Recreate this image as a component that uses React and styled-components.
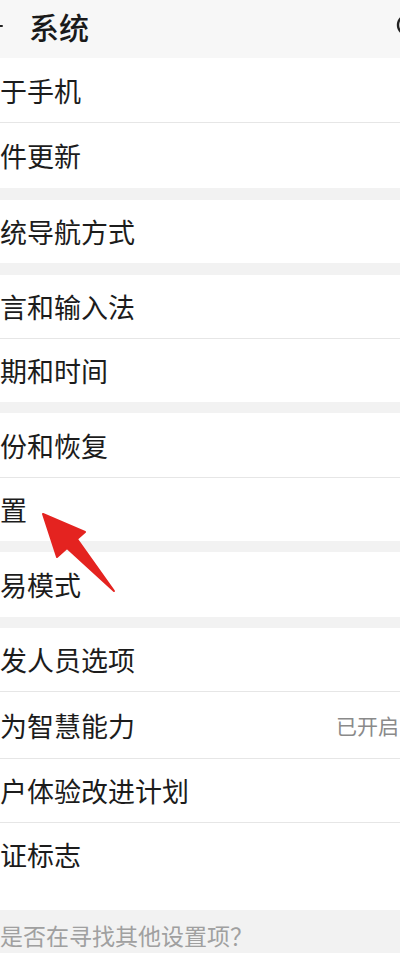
import React from 'react'
import styled, { createGlobalStyle } from 'styled-components'

const GlobalStyle = createGlobalStyle`
  html, body {
    margin: 0;
    padding: 0;
    background: #f2f2f2;
  }
  body {
    font-family: "Noto Sans CJK SC", "Noto Sans", sans-serif;
    overflow: hidden;
  }
`

const Page = styled.div`
  position: relative;
  width: 400px;
  height: 953px;
  overflow: hidden;
  background: #f2f2f2;
`

const Header = styled.div`
  display: flex;
  align-items: center;
  height: 58px;
  padding-bottom: 7px;
  box-sizing: border-box;
  background: #f7f7f7;
`

const BackIcon = styled.svg`
  flex: none;
  margin-left: -18px;
  width: 22px;
  height: 22px;
`

const Title = styled.h1`
  margin: 0 0 0 25px;
  font-size: 30px;
  font-weight: 500;
  color: #1a1a1a;
  line-height: 1;
`

const Spacer = styled.div`
  flex: 1;
`

const SearchIcon = styled.svg`
  flex: none;
  width: 26px;
  height: 26px;
  margin-right: -22px;
`

const Group = styled.div`
  background: #fff;
  margin-bottom: ${p => p.$gap}px;
  padding-bottom: ${p => p.$pad || 0}px;
`

const Row = styled.div`
  display: flex;
  align-items: center;
  box-sizing: border-box;
  height: ${p => p.$h}px;
  border-top: ${p => (p.$first ? 'none' : '1px solid #e6e6e6')};
`

const Label = styled.span`
  font-size: 27px;
  color: #1c1c1c;
  line-height: 1;
  white-space: nowrap;
`

const Status = styled.span`
  margin-left: auto;
  margin-right: 1px;
  font-size: 21px;
  color: #8a8a8a;
  line-height: 1;
  white-space: nowrap;
`

const Footer = styled.div`
  padding-top: 14px;
`

const Hint = styled.div`
  font-size: 23px;
  line-height: 1;
  color: #a0a0a0;
  white-space: nowrap;
`

const Pointer = styled.svg`
  position: absolute;
  left: 0;
  top: 0;
  width: 400px;
  height: 953px;
  pointer-events: none;
`

const groups = [
  { gap: 12, items: [{ label: '于手机', h: 64 }, { label: '件更新', h: 66 }] },
  { gap: 12, items: [{ label: '统导航方式', h: 63 }] },
  { gap: 11, items: [{ label: '言和输入法', h: 63 }, { label: '期和时间', h: 64 }] },
  { gap: 11, items: [{ label: '份和恢复', h: 64 }, { label: '置', h: 64 }] },
  { gap: 11, items: [{ label: '易模式', h: 65 }] },
  {
    gap: 0,
    pad: 24,
    items: [
      { label: '发人员选项', h: 63 },
      { label: '为智慧能力', h: 67, status: '已开启' },
      { label: '户体验改进计划', h: 64 },
      { label: '证标志', h: 64 },
    ],
  },
]

export default function App() {
  return (
    <Page>
      <GlobalStyle />
      <Header>
        <BackIcon viewBox="0 0 22 22">
          <path d="M20 11H3M10 4l-7 7 7 7" fill="none" stroke="#222" strokeWidth="2" strokeLinecap="round" />
        </BackIcon>
        <Title>系统</Title>
        <Spacer />
        <SearchIcon viewBox="0 0 26 26">
          <circle cx="12" cy="12" r="10" fill="none" stroke="#222" strokeWidth="2.4" />
        </SearchIcon>
      </Header>
      {groups.map((g, gi) => (
        <Group key={gi} $gap={g.gap} $pad={g.pad}>
          {g.items.map((it, i) => (
            <Row key={it.label} $first={i === 0} $h={it.h}>
              <Label>{it.label}</Label>
              {it.status && <Status>{it.status}</Status>}
            </Row>
          ))}
        </Group>
      ))}
      <Footer>
        <Hint>是否在寻找其他设置项？</Hint>
      </Footer>
      <Pointer viewBox="0 0 400 953">
        <polygon
          points="43,514 85,532 77,539 114,591 67,548 57,557"
          fill="#e42320"
          stroke="#e42320"
          strokeWidth="2"
          strokeLinejoin="round"
        />
      </Pointer>
    </Page>
  )
}
